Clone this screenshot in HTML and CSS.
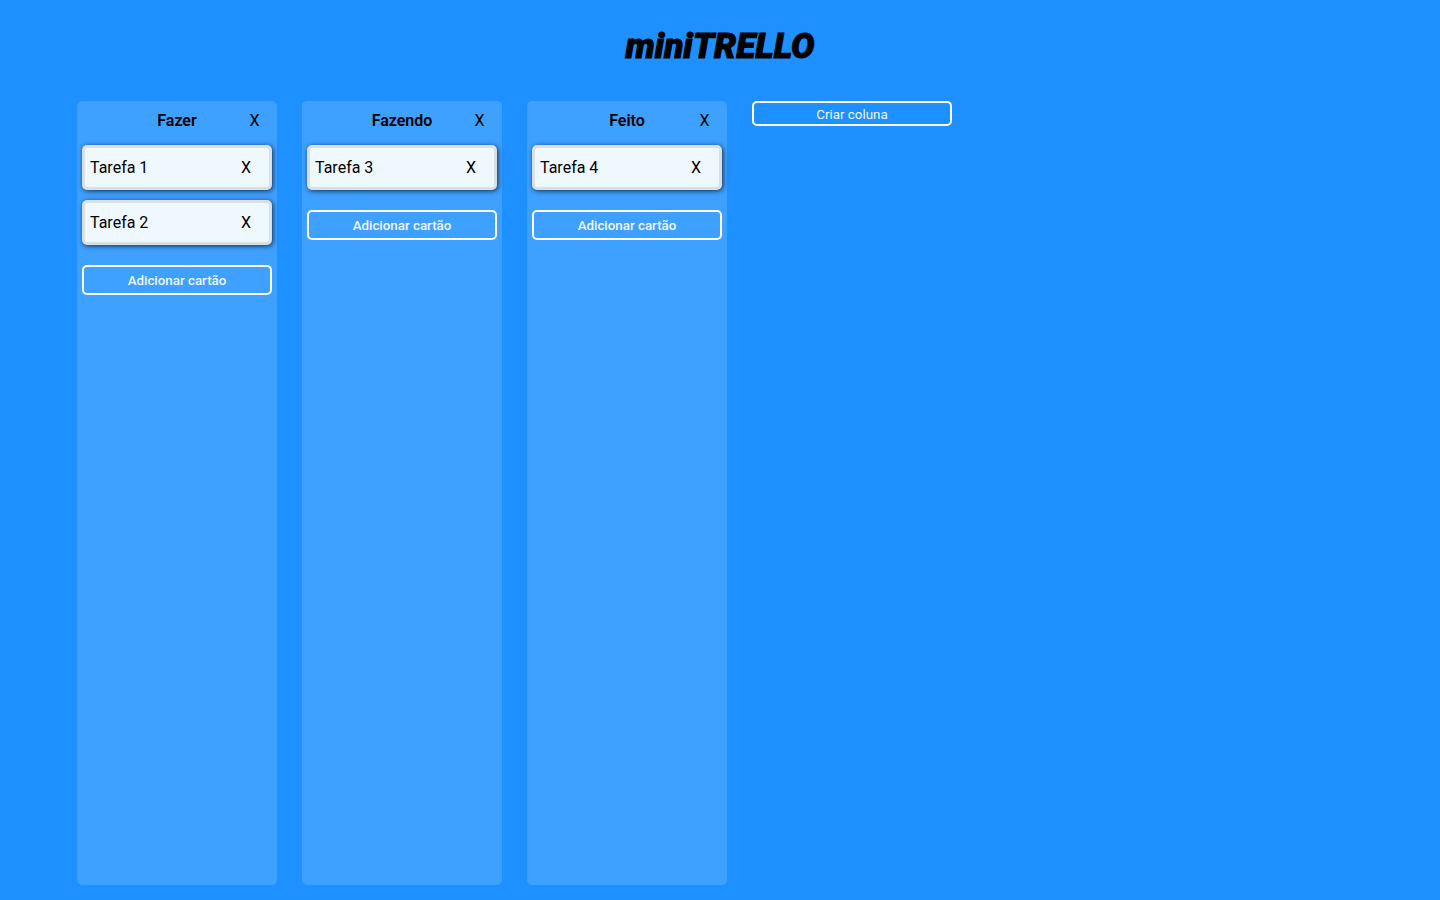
FILE: index.html
```html
<!DOCTYPE html>
<html lang="pt-BR">
<head>
<meta charset="utf-8">
<title>miniTRELLO</title>
<link rel="stylesheet" href="styles.css">
</head>
<body>
<header class="header"><h1 class="logo">miniTRELLO</h1></header>
<main class="board">
  <section class="column">
    <div class="column-head"><h2 class="column-title">Fazer</h2><button class="remove" type="button" aria-label="Remover coluna Fazer">X</button></div>
    <ul class="cards">
      <li class="card"><span>Tarefa 1</span><button class="remove" type="button" aria-label="Remover Tarefa 1">X</button></li>
      <li class="card"><span>Tarefa 2</span><button class="remove" type="button" aria-label="Remover Tarefa 2">X</button></li>
    </ul>
    <button class="outline add-card" type="button">Adicionar cartão</button>
  </section>
  <section class="column">
    <div class="column-head"><h2 class="column-title">Fazendo</h2><button class="remove" type="button" aria-label="Remover coluna Fazendo">X</button></div>
    <ul class="cards">
      <li class="card"><span>Tarefa 3</span><button class="remove" type="button" aria-label="Remover Tarefa 3">X</button></li>
    </ul>
    <button class="outline add-card" type="button">Adicionar cartão</button>
  </section>
  <section class="column">
    <div class="column-head"><h2 class="column-title">Feito</h2><button class="remove" type="button" aria-label="Remover coluna Feito">X</button></div>
    <ul class="cards">
      <li class="card"><span>Tarefa 4</span><button class="remove" type="button" aria-label="Remover Tarefa 4">X</button></li>
    </ul>
    <button class="outline add-card" type="button">Adicionar cartão</button>
  </section>
  <button class="outline add-column" type="button">Criar coluna</button>
</main>
</body>
</html>
```

FILE: styles.css
```css
* {
  box-sizing: border-box;
  margin: 0;
  padding: 0;
}

body {
  display: flex;
  flex-direction: column;
  min-height: 100vh;
  background: #1e90ff;
  color: #000;
  font: 400 16px/20px Roboto, sans-serif;
}

.header {
  padding: 27px 20px 34px;
  text-align: center;
}

.logo {
  font: italic 900 35px/40px Roboto, sans-serif;
  -webkit-text-stroke: 1px #000;
}

.board {
  flex: 1;
  display: flex;
  align-items: stretch;
  gap: 25px;
  margin: 0 5%;
  padding: 0 5px 15px;
}

.column {
  flex: 0 0 200px;
  padding: 0 5px;
  border-radius: 5px;
  background: #3ea0ff;
}

.column-head {
  display: grid;
  grid-template-columns: 35px 1fr 35px;
  align-items: center;
  height: 39px;
}

.column-title {
  grid-column: 2;
  font-size: 16px;
  font-weight: 600;
  text-align: center;
}

.remove {
  border: 0;
  background: none;
  color: inherit;
  font: inherit;
  cursor: pointer;
}

.cards {
  display: grid;
  gap: 10px;
  padding-top: 5px;
  list-style: none;
}

.card {
  display: flex;
  align-items: center;
  justify-content: space-between;
  height: 45px;
  padding: 0 18px 0 5px;
  border: 3px solid #d8e0e6;
  border-radius: 5px;
  background: #f0f8ff;
  box-shadow: 1px 1px 5px rgba(0, 0, 0, 0.7);
}

.outline {
  padding-top: 1px;
  border: 2px solid #fffafa;
  border-radius: 5px;
  background: none;
  color: #f0f8ff;
  font-family: Roboto, sans-serif;
  font-weight: 500;
  cursor: pointer;
}

.add-card {
  width: 100%;
  height: 30px;
  margin-top: 20px;
}

.add-column {
  flex: 0 0 200px;
  align-self: flex-start;
  height: 25px;
  font-weight: 400;
}
```
